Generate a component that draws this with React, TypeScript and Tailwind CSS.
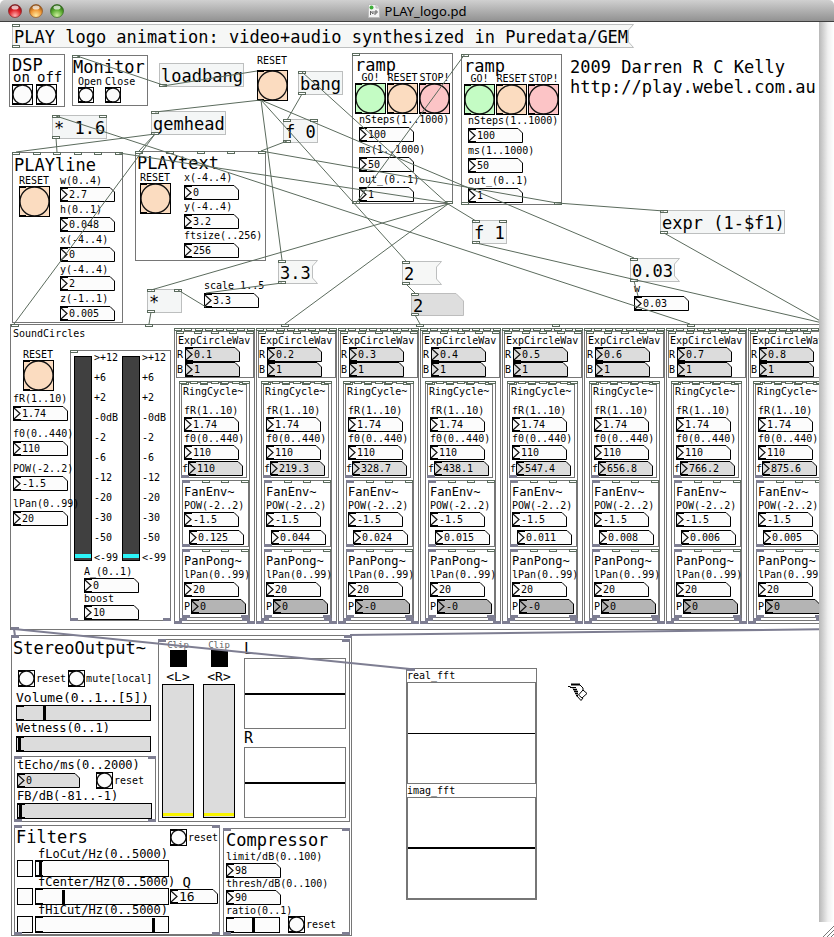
import React from 'react';
import clsx from 'clsx';

interface PanelProps {
  className?: string;
  inlets?: string;
  outlets?: string;
  children?: React.ReactNode;
}

// One character per port: "c" is a control port, "s" a signal port, "-" an empty slot
const Ports: React.FC<{ kinds: string; side: 'top' | 'bottom' }> = ({ kinds, side }) => (
  <span
    className={clsx(
      'pointer-events-none absolute -inset-x-px flex justify-between',
      side === 'top' ? '-top-px' : '-bottom-px',
    )}
  >
    {kinds.split('').map((kind, i) => (
      <span
        key={i}
        className={clsx(
          'h-[3px] w-2',
          kind === 'c' && 'border border-[#5b6b5d] bg-white',
          kind === 's' && 'bg-[#7e7e92]',
        )}
      />
    ))}
  </span>
);

const Panel: React.FC<PanelProps> = ({ className, inlets, outlets, children }) => (
  <section className={clsx('border border-[#767676] bg-white', className)}>
    {children}
    {inlets && <Ports kinds={inlets} side="top" />}
    {outlets && <Ports kinds={outlets} side="bottom" />}
  </section>
);

const ObjectBox: React.FC<PanelProps> = ({ className, inlets, outlets, children }) => (
  <div className={clsx('absolute h-6 border border-[#bdbfbf] bg-[#f4f6f6] pl-px pt-px text-[17px] leading-[22px]', className)}>
    {children}
    {inlets && <Ports kinds={inlets} side="top" />}
    {outlets && <Ports kinds={outlets} side="bottom" />}
  </div>
);

const MessageBox: React.FC<{ className: string; width: number; children: React.ReactNode }> = ({
  className,
  width,
  children,
}) => (
  <button className={clsx('absolute h-6 text-left text-[17px] leading-[26px]', className)}>
    <svg className="absolute left-0 top-0" width={width} height={24}>
      <path
        d={`M.5 .5H${width - 0.5}L${width - 5.5} 6V18L${width - 0.5} 23.5H.5Z`}
        fill="#f6f7f6"
        stroke="#bdbfbf"
      />
    </svg>
    <span className="relative pl-[2px]">{children}</span>
    <span className="absolute left-0 top-0 h-[3px] w-2 border border-[#5b6b5d] bg-white" />
    <span className="absolute bottom-0 left-0 h-[3px] w-2 border border-[#5b6b5d] bg-white" />
  </button>
);

const Bang: React.FC<{ size?: number; fill?: string; label: string }> = ({ size = 31, fill = '#fcfcfc', label }) => (
  <button aria-label={label} className="block shrink-0">
    <svg className="block" width={size} height={size}>
      <rect x=".5" y=".5" width={size - 1} height={size - 1} fill={fill} stroke="#000" />
      <circle cx={size / 2} cy={size / 2} r={size / 2 - 1} fill="none" stroke="#111" strokeWidth="1.3" />
      <path d={`M0 1H7M0 ${size - 1}H7`} stroke="#000" strokeWidth="2" />
    </svg>
  </button>
);

const PEACH = '#fbdcc0';
const GREEN = '#c4fcc4';
const PINK = '#fcc4c6';

interface NumberBoxProps {
  value: string;
  id?: string;
  label?: string;
  width?: number;
  fill?: string;
  big?: boolean;
}

const NumberBox: React.FC<NumberBoxProps> = ({ value, id, label, width = 55, fill = '#fcfcfc', big }) => (
  <span className="relative block shrink-0">
    <svg className="block" width={width} height={15}>
      <path d={`M.5 .5H${width - 5}L${width - 0.5} 5V14.5H.5Z`} fill={fill} stroke="#000" />
      <path d="M1 2L7 7.5L1 13" fill="none" stroke="#111" strokeWidth="1.2" />
      <path d="M0 1H8M0 14H8" stroke="#000" strokeWidth="2" />
    </svg>
    <input
      id={id}
      aria-label={label}
      defaultValue={value}
      className={clsx(
        'absolute inset-0 w-full bg-transparent pl-[9px] leading-[15px] outline-none',
        big ? 'text-[13px]' : 'text-[10px]',
      )}
    />
  </span>
);

const NumberField: React.FC<{ label: string; value: string; tight?: boolean }> = ({ label, value, tight }) => (
  <label className={clsx('flex flex-col text-[10px] leading-[11px]', tight ? 'gap-px' : 'gap-[2px]')}>
    <span>{label}</span>
    <NumberBox value={value} />
  </label>
);

const ResetBang: React.FC = () => (
  <div className="w-[31px] text-[10px] leading-[11px]">
    <div>RESET</div>
    <Bang label="RESET" fill={PEACH} />
  </div>
);

const SmallReset: React.FC<{ text: string }> = ({ text }) => (
  <div className="flex items-center gap-px text-[10px] leading-[11px]">
    <Bang size={17} label={text} />
    <span>{text}</span>
  </div>
);

const Slider: React.FC<{ label: string; value: number; className: string }> = ({ label, value, className }) => (
  <span className={clsx('relative block border border-black', className)}>
    <input
      type="range"
      aria-label={label}
      defaultValue={value}
      className="block h-full w-full appearance-none bg-transparent [&::-webkit-slider-thumb]:h-[14px] [&::-webkit-slider-thumb]:w-[3px] [&::-webkit-slider-thumb]:appearance-none [&::-webkit-slider-thumb]:bg-black"
    />
    <span className="absolute -left-px top-0 h-px w-2 bg-black" />
    <span className="absolute -left-px bottom-0 h-px w-2 bg-black" />
  </span>
);

const Title: React.FC<{ children: React.ReactNode }> = ({ children }) => (
  <h2 className="text-[17px] leading-[18px]">{children}</h2>
);

const Ramp: React.FC<{ className: string }> = ({ className }) => (
  <Panel className={clsx('absolute h-[151px] w-[101px] pl-[2px] pt-[2px]', className)} inlets="c" outlets="cc">
    <Title>ramp</Title>
    <div className="-mt-px flex gap-px text-[10px] leading-[10px]">
      {[
        { text: 'GO!', fill: GREEN },
        { text: 'RESET', fill: PEACH },
        { text: 'STOP!', fill: PINK },
      ].map(({ text, fill }) => (
        <div key={text} className="w-[31px]">
          <div className="text-center">{text}</div>
          <Bang label={text} fill={fill} />
        </div>
      ))}
    </div>
    <div className="flex flex-col gap-[2px] pl-1">
      <NumberField label="nSteps(1..1000)" value="100" />
      <NumberField label="ms(1..1000)" value="50" />
      <NumberField label="out_(0..1)" value="1" />
    </div>
  </Panel>
);

const LEVELS = ['>+12', '+6', '+2', '-0dB', '-2', '-6', '-12', '-20', '-30', '-50', '<-99'];

const VuMeter: React.FC = () => (
  <>
    <div
      role="meter"
      aria-label="Level"
      aria-valuenow={-99}
      className="flex h-[205px] w-[18px] flex-col justify-end border border-black bg-[#404040] pb-[2px]"
    >
      <div className="h-1 bg-[#2cf4f8]" />
    </div>
    <div className="-mt-2 w-[26px] text-[10px] leading-5">
      {LEVELS.map((level) => (
        <div key={level}>{level}</div>
      ))}
    </div>
  </>
);

interface VoiceData {
  r: string;
  freq: string;
  env: string;
  pan: string;
}

const voices: VoiceData[] = [
  { r: '0.1', freq: '110', env: '0.125', pan: '0' },
  { r: '0.2', freq: '219.3', env: '0.044', pan: '0' },
  { r: '0.3', freq: '328.7', env: '0.024', pan: '-0' },
  { r: '0.4', freq: '438.1', env: '0.015', pan: '-0' },
  { r: '0.5', freq: '547.4', env: '0.011', pan: '-0' },
  { r: '0.6', freq: '656.8', env: '0.008', pan: '0' },
  { r: '0.7', freq: '766.2', env: '0.006', pan: '0' },
  { r: '0.8', freq: '875.6', env: '0.005', pan: '0' },
];

const Voice: React.FC<{ voice: VoiceData }> = ({ voice }) => (
  <Panel className="relative h-[296px] w-[81px] shrink-0 pl-px pt-[2px]" inlets="cccccccc" outlets="ss">
    <Panel className="relative h-[47px] w-[78px] pt-[3px] text-[10px] leading-[12px]" inlets="ccccc">
      <div className="pl-px">ExpCircleWav</div>
      <label className="flex items-center">
        <span className="w-2">R</span>
        <NumberBox value={voice.r} fill="#dcdcdc" />
      </label>
      <label className="flex items-center">
        <span className="w-2">B</span>
        <NumberBox value="1" fill="#dcdcdc" />
      </label>
    </Panel>
    <Panel className="relative ml-[3px] mt-[3px] h-[240px] w-[71px] pl-px" inlets="ccccccc" outlets="ss">
      <Panel className="relative h-[96px] w-[66px] pt-[3px]" inlets="cccc" outlets="s--">
        <div className="mb-2 pl-px text-[10px] leading-[11px]">RingCycle~</div>
        <div className="flex flex-col gap-px pl-[2px]">
          <NumberField label="fR(1..10)" value="1.74" tight />
          <NumberField label="f0(0..440)" value="110" tight />
        </div>
        <label className="mt-px flex items-center text-[10px] leading-[11px]">
          <span className="w-[6px]">f</span>
          <NumberBox value={voice.freq} fill="#dcdcdc" />
        </label>
      </Panel>
      <Panel className="relative ml-px mt-[2px] h-[67px] w-[67px] pl-px pt-[3px]" inlets="sccc" outlets="s--">
        <div className="text-[12px] leading-[16px]">FanEnv~</div>
        <NumberField label="POW(-2..2)" value="-1.5" tight />
        <div className="ml-[5px] mt-[3px]">
          <NumberBox label="Envelope" value={voice.env} />
        </div>
      </Panel>
      <Panel className="relative ml-px mt-[2px] h-[69px] w-[67px] pl-px pt-[3px]" inlets="sccc" outlets="ss">
        <div className="text-[12px] leading-[16px]">PanPong~</div>
        <NumberField label="lPan(0..99)" value="20" />
        <label className="mt-[2px] flex items-center text-[10px] leading-[11px]">
          <span className="w-[7px]">P</span>
          <NumberBox value={voice.pan} fill="#b4b4b4" />
        </label>
      </Panel>
    </Panel>
  </Panel>
);

const SoundCircles: React.FC = () => (
  <Panel className="absolute -right-2 left-[10px] top-[302px] flex h-[306px] overflow-hidden">
    <div className="relative z-10 w-[59px] shrink-0 whitespace-nowrap pl-[2px] pt-[3px] text-[10px] leading-[11px]">
      <div>SoundCircles</div>
      <div className="mb-[2px] ml-[10px] mt-[10px]">
        <ResetBang />
      </div>
      <div className="flex flex-col gap-[7px]">
        <NumberField label="fR(1..10)" value="1.74" />
        <NumberField label="f0(0..440)" value="110" />
        <NumberField label="POW(-2..2)" value="-1.5" />
        <NumberField label="lPan(0..99)" value="20" />
      </div>
    </div>
    <Panel className="relative mt-[25px] h-[271px] w-[101px] shrink-0 pt-[5px]" inlets="c" outlets="ss">
      <div className="flex items-start gap-[2px] pl-[3px]">
        <VuMeter />
        <VuMeter />
      </div>
      <div className="-mt-[2px] flex flex-col pl-[13px]">
        <NumberField label="A_(0..1)" value="0" tight />
        <NumberField label="boost" value="10" tight />
      </div>
    </Panel>
    <div className="ml-[3px] mt-[3px] flex gap-px">
      {voices.map((voice) => (
        <Voice key={voice.r} voice={voice} />
      ))}
    </div>
  </Panel>
);

const ClipMeter: React.FC<{ channel: string }> = ({ channel }) => (
  <div className="flex w-8 flex-col items-center">
    <div className="text-[9px] leading-[10px] text-[#666]">Clip</div>
    <div className="h-[17px] w-[17px] bg-black" />
    <div className="mt-[3px] text-[13px] leading-[14px]">{`<${channel}>`}</div>
    <div
      role="meter"
      aria-label={`Output ${channel}`}
      aria-valuenow={0}
      className="flex h-[134px] w-8 flex-col justify-end border border-black bg-[#dcdcdc] pb-px"
    >
      <div className="h-[3px] bg-[#f8f400]" />
    </div>
  </div>
);

const Scope: React.FC<{ className: string; thin?: boolean }> = ({ className, thin }) => (
  <div className={clsx('flex flex-col justify-center border border-[#767676]', className)}>
    <div className={clsx('bg-black', thin ? 'h-px' : 'h-[2px]')} />
  </div>
);

const filters = [
  { label: 'fLoCut/Hz(0..5000)', value: 2 },
  { label: 'fCenter/Hz(0..5000)', value: 20, q: '16' },
  { label: 'fHiCut/Hz(0..5000)', value: 90 },
];

const StereoOutput: React.FC = () => (
  <Panel className="absolute left-[11px] top-[613px] h-[301px] w-[341px]" inlets="ss">
    <div className="flex">
      <div className="w-[146px] shrink-0 whitespace-nowrap pt-[3px]">
        <div className="pl-px">
          <Title>StereoOutput~</Title>
        </div>
        <div className="mt-[13px] flex gap-[2px] pl-[6px]">
          <SmallReset text="reset" />
          <SmallReset text="mute[local]" />
        </div>
        <div className="pl-1 pt-[3px]">
          <div className="text-[13px] leading-[15px]">Volume(0..1..[5])</div>
          <Slider label="Volume" value={20} className="h-4 w-[135px] bg-[#dcdcdc]" />
          <div className="text-[12px] leading-[15px]">Wetness(0..1)</div>
          <Slider label="Wetness" value={1} className="h-4 w-[135px] bg-[#dcdcdc]" />
        </div>
        <Panel className="relative ml-[2px] mt-1 h-[66px] w-[142px] pl-[2px] pt-px" inlets="ss" outlets="ss">
          <label className="block text-[12px] leading-[14px]" htmlFor="echo-time">
            tEcho/ms(0..2000)
          </label>
          <div className="flex items-center gap-4">
            <NumberBox id="echo-time" value="0" width={63} fill="#dcdcdc" />
            <SmallReset text="reset" />
          </div>
          <div className="text-[12px] leading-[14px]">FB/dB(-81..-1)</div>
          <Slider label="FB" value={1} className="h-4 w-[135px] bg-[#dcdcdc]" />
        </Panel>
      </div>
      <Panel className="relative mt-[3px] flex h-[183px] w-[192px] gap-[9px] pl-[3px]" inlets="ss">
        <ClipMeter channel="L" />
        <ClipMeter channel="R" />
        <div className="text-[15px] leading-[18px]">
          <div>L</div>
          <Scope className="h-[71px] w-[102px]" />
          <div>R</div>
          <Scope className="h-[71px] w-[102px]" />
        </div>
      </Panel>
    </div>
    <div className="ml-[2px] mt-[3px] flex items-end gap-[3px]">
      <Panel className="relative h-[110px] w-[206px] pt-[2px]" inlets="ss" outlets="ss">
        <div className="mb-[3px] flex items-center justify-between px-px">
          <Title>Filters</Title>
          <SmallReset text="reset" />
        </div>
        {filters.map(({ label, value, q }) => (
          <div key={label}>
            <div className="flex justify-between pl-[23px] pr-[28px] text-[12px] leading-[11px]">
              <span>{label}</span>
              {q && <span className="text-[14px]">Q</span>}
            </div>
            <div className="flex items-center gap-[2px] pl-[2px]">
              <input
                type="checkbox"
                aria-label={`${label} on`}
                className="h-[17px] w-4 shrink-0 appearance-none border border-black bg-[#fcfcfc]"
              />
              <Slider label={label} value={value} className="h-[17px] w-[134px] bg-[#fcfcfc]" />
              {q && (
                <span className="-ml-px">
                  <NumberBox label="Q" value={q} width={48} big />
                </span>
              )}
            </div>
          </div>
        ))}
      </Panel>
      <Panel className="relative h-[107px] w-[127px] pl-[2px] pt-[2px]" inlets="ss" outlets="ss">
        <Title>Compressor</Title>
        <div className="flex flex-col pt-[2px]">
          <NumberField label="limit/dB(0..100)" value="98" tight />
          <NumberField label="thresh/dB(0..100)" value="90" tight />
          <div className="text-[10px] leading-[11px]">ratio(0..1)</div>
          <div className="flex items-center gap-2">
            <Slider label="ratio" value={50} className="h-4 w-[54px] bg-[#fcfcfc]" />
            <SmallReset text="reset" />
          </div>
        </div>
      </Panel>
    </div>
  </Panel>
);

// x1, y1, x2, y2
const controlWires = [
  [77, 56, 163, 85],
  [163, 86, 257, 71],
  [261, 100, 155, 112],
  [155, 134, 16, 152],
  [155, 134, 139, 151],
  [155, 134, 14, 324],
  [56, 138, 57, 152],
  [56, 116, 690, 324],
  [119, 153, 448, 203],
  [287, 141, 261, 151],
  [261, 151, 557, 203],
  [302, 94, 287, 120],
  [302, 72, 448, 204],
  [448, 204, 476, 221],
  [261, 100, 282, 260],
  [261, 100, 406, 261],
  [261, 100, 634, 258],
  [465, 54, 356, 203],
  [557, 203, 664, 211],
  [448, 204, 151, 290],
  [448, 204, 285, 324],
  [282, 283, 206, 293],
  [206, 307, 178, 290],
  [151, 312, 149, 324],
  [406, 284, 415, 293],
  [415, 315, 420, 324],
  [476, 243, 840, 327],
  [664, 233, 840, 332],
  [634, 281, 638, 296],
];

const signalWires = [
  [14, 629, 15, 636],
  [14, 629, 410, 669],
  [350, 635, 840, 629],
];

const circleInlets = [11, 145, 281, 416, 552, 687];

const Wires: React.FC = () => (
  <svg className="pointer-events-none absolute left-0 top-0 h-[915px] w-[840px]" viewBox="0 22 840 915">
    {circleInlets.map((x) => (
      <rect key={x} x={x + 0.5} y="324.5" width="7" height="2" fill="#fff" stroke="#5b6b5d" />
    ))}
    <rect x="11" y="627" width="8" height="3" fill="#7e7e92" />
    <rect x="407" y="668" width="8" height="3" fill="#7e7e92" />
    {controlWires.map(([x1, y1, x2, y2], i) => (
      <line key={i} x1={x1} y1={y1} x2={x2} y2={y2} stroke="#5b6b5d" />
    ))}
    {signalWires.map(([x1, y1, x2, y2], i) => (
      <line key={i} x1={x1} y1={y1} x2={x2} y2={y2} stroke="#7e7e92" strokeWidth="2" />
    ))}
  </svg>
);

const HandCursor: React.FC = () => (
  <svg className="absolute left-[568px] top-[661px]" width="20" height="20" fill="none" stroke="#000">
    <path d="M3 1.5H12" strokeWidth="2" />
    <path d="M0 3.5H2.5M2 4.5H8M5 5.5L7 7.5M12 2L15 5V8" />
    <path d="M5 6.5H9M6 8.5H10M7 10.5H10M8 12.5H10" strokeWidth="1.3" />
    <path d="M15 7L19 10.5L14 15L10.5 12ZM9 13L13 17.5L15 15" />
  </svg>
);

const lights = [
  { name: 'Close', from: '#ffb0b0', mid: '#e0252b', edge: '#7c1014' },
  { name: 'Minimize', from: '#ffe9a0', mid: '#f09a38', edge: '#8a4a10' },
  { name: 'Zoom', from: '#d0f0a0', mid: '#5fae35', edge: '#24600f' },
];

const TitleBar: React.FC = () => (
  <header className="relative flex h-[22px] items-center justify-center rounded-t-[5px] border-b border-[#3f3f3f] bg-linear-to-b from-[#d0d0d0] to-[#929292]">
    <div className="absolute left-2 top-1 flex gap-[7px]">
      {lights.map(({ name, from, mid, edge }) => (
        <button key={name} aria-label={name}>
          <svg className="block" width="14" height="14">
            <defs>
              <radialGradient id={name} cx=".5" cy=".85" r=".8">
                <stop offset="0" stopColor={from} />
                <stop offset=".55" stopColor={mid} />
                <stop offset="1" stopColor={edge} />
              </radialGradient>
            </defs>
            <circle cx="7" cy="7" r="6.5" fill={`url(#${name})`} stroke={edge} strokeOpacity=".6" />
            <ellipse cx="7" cy="3.5" rx="3.5" ry="2" fill="#fff" opacity=".7" />
          </svg>
        </button>
      ))}
    </div>
    <div className="flex items-center gap-[5px]">
      <svg width="12" height="14">
        <path d="M.5 .5H8L11.5 4V13.5H.5Z" fill="#f4f4f4" stroke="#bbb" />
        <path d="M8 .5V4H11.5" fill="#ddd" stroke="#bbb" />
        <circle cx="3.5" cy="3.5" r="2" fill="#3fae3a" />
        <path d="M2.5 11V7L5 10V7M7 11V7H9V9H7" fill="none" stroke="#666" />
      </svg>
      <h1 className="font-['Noto_Sans','Open_Sans',sans-serif] text-[13px] leading-5">PLAY_logo.pd</h1>
    </div>
  </header>
);

export default function App() {
  return (
    <div className="flex min-h-screen flex-col bg-white font-['DejaVu_Sans_Mono',monospace] text-black">
      <TitleBar />
      <div className="flex grow">
        <main className="relative min-h-[915px] grow overflow-hidden whitespace-nowrap">
          <MessageBox className="left-[12px] top-[2px]" width={622}>
            PLAY logo animation: video+audio synthesized in Puredata/GEM
          </MessageBox>

          <Panel className="absolute left-[9px] top-[32px] h-[53px] w-[56px] pl-[2px] pt-px">
            <Title>DSP</Title>
            <div className="-mt-[3px] flex gap-[3px] text-[14px] leading-[13px]">
              {['on', 'off'].map((text) => (
                <div key={text} className="w-[21px]">
                  <div className="pl-px">{text}</div>
                  <Bang size={21} label={`DSP ${text}`} />
                </div>
              ))}
            </div>
          </Panel>

          <Panel className="absolute left-[72px] top-[33px] h-[51px] w-[76px] pt-[2px]" inlets="c">
            <Title>Monitor</Title>
            <div className="flex gap-[3px] pl-[5px] text-[10px] leading-[11px]">
              {['Open', 'Close'].map((text) => (
                <div key={text}>
                  <div>{text}</div>
                  <Bang size={16} label={text} />
                </div>
              ))}
            </div>
          </Panel>

          <ObjectBox className="left-[159px] top-[41px] w-[85px]" outlets="c">loadbang</ObjectBox>
          <ObjectBox className="left-[298px] top-[49px] w-[45px]" inlets="c" outlets="c">bang</ObjectBox>
          <ObjectBox className="left-[283px] top-[97px] w-[35px]" inlets="cc" outlets="c">f 0</ObjectBox>
          <ObjectBox className="left-[151px] top-[89px] w-[75px]" inlets="c" outlets="c">gemhead</ObjectBox>
          <ObjectBox className="left-[52px] top-[93px] w-[55px]" inlets="cc" outlets="c">* 1.6</ObjectBox>
          <ObjectBox className="left-[147px] top-[267px] w-[35px]" inlets="cc" outlets="c">*</ObjectBox>
          <ObjectBox className="left-[472px] top-[198px] w-[35px]" inlets="cc" outlets="c">f 1</ObjectBox>
          <ObjectBox className="left-[660px] top-[188px] w-[125px]" inlets="c" outlets="c">expr (1-$f1)</ObjectBox>

          <MessageBox className="left-[278px] top-[238px]" width={40}>3.3</MessageBox>
          <MessageBox className="left-[402px] top-[239px]" width={40}>2</MessageBox>
          <MessageBox className="left-[630px] top-[236px]" width={50}>0.03</MessageBox>

          <div className="absolute left-[411px] top-[271px] h-[23px] text-[17px] leading-[26px]">
            <svg className="absolute left-0 top-0" width="53" height="23">
              <path d="M.5 .5H45L52.5 8V22.5H.5Z" fill="#dedede" stroke="#bdbdbd" />
              <path d="M.5 .5H7.5V2.5H.5ZM.5 20.5H7.5V22.5H.5Z" fill="#fff" stroke="#5b6b5d" />
            </svg>
            <span className="relative pl-[2px]">2</span>
          </div>

          <div className="absolute left-[257px] top-[31px] text-[10px] leading-[15px]">
            <div className="pb-[2px]">RESET</div>
            <Bang label="RESET" fill={PEACH} />
          </div>

          <Ramp className="left-[352px] top-[31px]" />
          <Ramp className="left-[461px] top-[32px]" />

          <div className="absolute left-[570px] top-[35px] text-[17px] leading-5">
            <p>2009 Darren R C Kelly</p>
            <p>http://play.webel.com.au</p>
          </div>

          <Panel className="absolute left-[12px] top-[130px] h-[171px] w-[111px] pl-px pt-[3px]" inlets="cccccc">
            <Title>PLAYline</Title>
            <div className="flex gap-[10px] pl-[5px] pt-px">
              <ResetBang />
              <div className="flex flex-col gap-[2px]">
                <NumberField label="w(0..4)" value="2.7" tight />
                <NumberField label="h(0..1)" value="0.048" />
                <NumberField label="x(-4..4)" value="0" />
                <NumberField label="y(-4..4)" value="2" tight />
                <NumberField label="z(-1..1)" value="0.005" />
              </div>
            </div>
          </Panel>

          <Panel className="absolute left-[135px] top-[129px] h-[110px] w-[131px] pl-px pt-[2px]" inlets="ccccc">
            <Title>PLAYtext</Title>
            <div className="flex gap-[13px] pl-[3px]">
              <ResetBang />
              <div className="flex flex-col gap-px">
                <NumberField label="x(-4..4)" value="0" />
                <NumberField label="y(-4..4)" value="3.2" />
                <NumberField label="ftsize(..256)" value="256" />
              </div>
            </div>
          </Panel>

          <div className="absolute left-[204px] top-[258px]">
            <NumberField label="scale 1..5" value="3.3" />
          </div>
          <div className="absolute left-[634px] top-[261px]">
            <NumberField label="w" value="0.03" />
          </div>

          <SoundCircles />
          <StereoOutput />

          <Panel className="absolute left-[406px] top-[646px] w-[131px] text-[10px] leading-[13px]">
            <div>real_fft</div>
            <Scope className="h-[102px]" thin />
            <div>imag_fft</div>
            <Scope className="h-[102px]" />
          </Panel>

          <Wires />
          <HandCursor />
        </main>
        <aside className="flex w-[15px] shrink-0 flex-col">
          <div className="grow bg-linear-to-r from-[#b8b8b8] via-[#f0f0f0] via-60% to-white" />
          <svg className="block" width="15" height="15" stroke="#777">
            <path d="M4 15L15 4M8 15L15 8M12 15L15 12" />
          </svg>
        </aside>
      </div>
    </div>
  );
}
